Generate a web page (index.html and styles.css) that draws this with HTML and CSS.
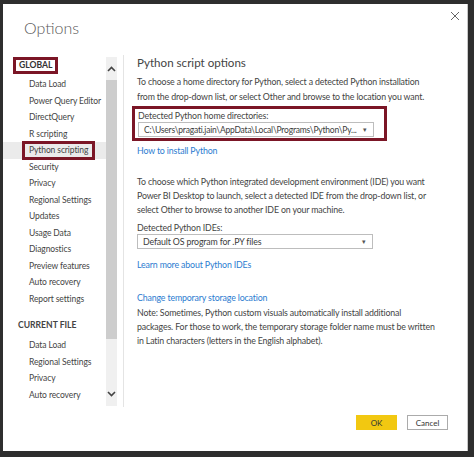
FILE: index.html
```html
<!DOCTYPE html>
<html>
<head>
<meta charset="utf-8">
<link rel="stylesheet" href="styles.css">
</head>
<body>
<div class="dialog">
  <div class="header">
    <h1 class="title">Options</h1>
    <svg class="close" width="10" height="10" viewBox="0 0 10 10"><path d="M1 1 L9 9 M9 1 L1 9" stroke="#666" stroke-width="1"/></svg>
  </div>
  <div class="main">
    <div class="nav">
      <div class="nav-list">
        <div class="section boxed-sec"><span class="redbox">GLOBAL</span></div>
        <div class="item">Data Load</div>
        <div class="item">Power Query Editor</div>
        <div class="item">DirectQuery</div>
        <div class="item">R scripting</div>
        <div class="item selected"><span class="redbox">Python scripting</span></div>
        <div class="item">Security</div>
        <div class="item">Privacy</div>
        <div class="item">Regional Settings</div>
        <div class="item">Updates</div>
        <div class="item">Usage Data</div>
        <div class="item">Diagnostics</div>
        <div class="item">Preview features</div>
        <div class="item">Auto recovery</div>
        <div class="item">Report settings</div>
        <div class="section current">CURRENT FILE</div>
        <div class="item">Data Load</div>
        <div class="item">Regional Settings</div>
        <div class="item">Privacy</div>
        <div class="item">Auto recovery</div>
      </div>
      <div class="scrollbar">
        <div class="sb-btn up"><svg width="9" height="6" viewBox="0 0 9 6"><path d="M1 5 L4.5 1.5 L8 5" fill="none" stroke="#444" stroke-width="1.6"/></svg></div>
        <div class="sb-thumb"></div>
        <div class="sb-rest"></div>
        <div class="sb-btn down"><svg width="9" height="6" viewBox="0 0 9 6"><path d="M1 1 L4.5 4.5 L8 1" fill="none" stroke="#444" stroke-width="1.6"/></svg></div>
      </div>
    </div>
    <div class="divider"></div>
    <div class="content">
      <h2 class="heading">Python script options</h2>
      <p class="para first-para">To choose a home directory for Python, select a detected Python installation from the drop-down list, or select Other and browse to the location you want.</p>
      <div class="home-box">
        <div class="label">Detected Python home directories:</div>
        <div class="select"><span class="sel-text">C:\Users\pragati.jain\AppData\Local\Programs\Python\Py...</span><span class="caret">&#9662;</span></div>
      </div>
      <a class="link first-link">How to install Python</a>
      <p class="para ide-para">To choose which Python integrated development environment (IDE) you want Power BI Desktop to launch, select a detected IDE from the drop-down list, or select Other to browse to another IDE on your machine.</p>
      <div class="label">Detected Python IDEs:</div>
      <div class="select"><span class="sel-text">Default OS program for .PY files</span><span class="caret">&#9662;</span></div>
      <a class="link ide-link">Learn more about Python IDEs</a>
      <a class="link storage-link">Change temporary storage location</a>
      <p class="para note">Note: Sometimes, Python custom visuals automatically install additional packages. For those to work, the temporary storage folder name must be written in Latin characters (letters in the English alphabet).</p>
    </div>
  </div>
  <div class="footer">
    <button class="btn ok">OK</button>
    <button class="btn cancel">Cancel</button>
  </div>
</div>
</body>
</html>
```
FILE: styles.css
```css
html, body {
  margin: 0;
  padding: 0;
}
body {
  background: #2e2e2e;
  width: 474px;
  height: 457px;
  box-sizing: border-box;
  padding: 4px 6px 6px 3px;
  font-family: Lato, "Open Sans", sans-serif;
  color: #3c3c3c;
  font-size: 8.8px;
  letter-spacing: -0.15px;
}
.dialog {
  background: #fff;
  height: 100%;
  display: flex;
  flex-direction: column;
  border-right: 1px solid #c8c8c8;
  box-sizing: border-box;
}
.header {
  height: 51px;
  display: flex;
  justify-content: space-between;
  align-items: flex-start;
  flex-shrink: 0;
}
.title {
  margin: 10px 0 0 21px;
  font-weight: 300;
  font-size: 16px;
  line-height: 28px;
  color: #5a5a5a;
  letter-spacing: 0;
}
.close {
  margin: 7px 7px 0 0;
}
.main {
  display: flex;
  height: 352px;
  flex-shrink: 0;
}
.nav {
  width: 114px;
  display: flex;
  padding-top: 2px;
}
.nav-list {
  width: 103px;
  overflow: hidden;
  font-size: 8.5px;
  letter-spacing: -0.1px;
}
.section {
  font-weight: 700;
  font-size: 8.6px;
  color: #333;
  padding-left: 15px;
  height: 17px;
  line-height: 17px;
  letter-spacing: 0;
}
.boxed-sec {
  margin-bottom: 2px;
}
.redbox {
  display: inline-block;
  border: 3px solid #7b1626;
  padding: 0 3px;
  line-height: 11px;
  margin-left: -5px;
}
.item {
  padding-left: 26px;
  height: 16.5px;
  line-height: 16.5px;
  white-space: nowrap;
  color: #444;
}
.item.selected {
  background: #ebebeb;
  padding-left: 19px;
}
.item.selected .redbox {
  margin-left: 0;
  line-height: 13px;
  padding: 0 4px;
  margin-top: -1px;
}
.current {
  margin-top: 10px;
  margin-bottom: 3px;
  color: #444;
}
.scrollbar {
  width: 11px;
  display: flex;
  flex-direction: column;
  background: #f0f0f0;
  height: 349px;
}
.sb-btn {
  height: 22px;
  display: flex;
  align-items: center;
  justify-content: center;
  flex-shrink: 0;
}
.sb-btn.up {
  align-items: flex-start;
  height: 23px;
}
.sb-btn.up svg { margin-top: 9px; }
.sb-thumb {
  height: 259px;
  background: #cdcdcd;
}
.sb-rest { flex: 1; }
.sb-btn.down svg { margin-top: -2px; }
.divider {
  width: 1px;
  background: #e4e4e4;
  margin-left: 6px;
  height: 352px;
}
.content {
  padding-left: 13px;
  width: 300px;
}
.heading {
  margin: 0;
  font-size: 11.6px;
  font-weight: 400;
  color: #444;
  line-height: 20px;
  margin-top: -2px;
  letter-spacing: 0;
}
.para {
  margin: 0;
  line-height: 15px;
  color: #444;
  margin-top: 1px;
}
.first-para {
  max-width: 288px;
}
.home-box {
  margin-top: 2px;
  margin-left: -5px;
  width: 242px;
  border: 3px solid #7b1626;
  padding: 0 4px 1px 3px;
}
.label {
  line-height: 13px;
  color: #444;
}
.home-box .label { line-height: 13px; }
.select {
  height: 15px;
  border: 1px solid #bdbdbd;
  display: flex;
  justify-content: space-between;
  align-items: center;
  padding: 0 6px 0 5px;
  box-sizing: border-box;
  width: 236px;
  white-space: nowrap;
  overflow: hidden;
}
.home-box .sel-text {
  font-size: 8.5px;
  letter-spacing: -0.2px;
}
.caret {
  font-size: 7px;
  color: #555;
}
.link {
  display: block;
  color: #2b7bd0;
  line-height: 15px;
}
.first-link { margin-top: 2px; }
.ide-para { margin-top: 17px; line-height: 14px; }
.ide-para + .label { margin-top: 4px; }
.ide-link { margin-top: 8px; }
.storage-link { margin-top: 18px; }
.note { margin-top: 0; line-height: 14px; padding-top: 1px; }
.footer {
  flex: 1;
  display: flex;
  justify-content: flex-end;
  align-items: flex-start;
  padding-top: 8px;
  padding-right: 19px;
  gap: 10px;
}
.btn {
  width: 41px;
  height: 15px;
  font-family: Lato, "Open Sans", sans-serif;
  font-size: 8px;
  padding: 0;
  color: #333;
  box-sizing: border-box;
}
.ok {
  background: #f2c811;
  border: none;
}
.cancel {
  background: #fff;
  border: 1px solid #ababab;
}
```
